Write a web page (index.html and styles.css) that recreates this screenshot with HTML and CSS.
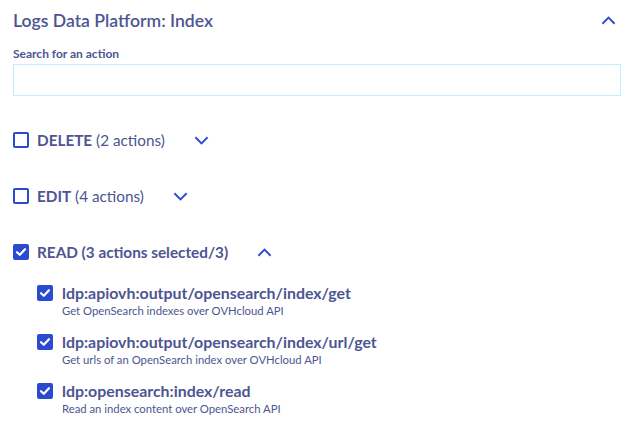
FILE: index.html
```html
<!DOCTYPE html>
<html lang="en">
<head>
<meta charset="utf-8">
<title>Logs Data Platform: Index</title>
<link rel="stylesheet" href="styles.css">
</head>
<body>
<div class="panel">
  <div class="panel-header">
    <h2 class="panel-title">Logs Data Platform: Index</h2>
    <svg class="chev chev-header" viewBox="0 0 16 9"><polyline points="1.5,8 8,1.5 14.5,8"/></svg>
  </div>

  <label class="search-label" for="search">Search for an action</label>
  <input class="search-input" id="search" type="text">

  <div class="group">
    <div class="group-row">
      <span class="box"></span>
      <span class="group-name"><b>DELETE</b> (2 actions)</span>
      <svg class="chev" viewBox="0 0 16 9"><polyline points="1.5,1 8,7.5 14.5,1"/></svg>
    </div>
  </div>

  <div class="group">
    <div class="group-row">
      <span class="box"></span>
      <span class="group-name"><b>EDIT</b> (4 actions)</span>
      <svg class="chev" viewBox="0 0 16 9"><polyline points="1.5,1 8,7.5 14.5,1"/></svg>
    </div>
  </div>

  <div class="group">
    <div class="group-row">
      <span class="box checked"><svg viewBox="0 0 16 16"><polyline points="4,8.2 6.8,10.8 12,5.2"/></svg></span>
      <span class="group-name"><b>READ (3 actions selected/3)</b></span>
      <svg class="chev" viewBox="0 0 16 9"><polyline points="1.5,8 8,1.5 14.5,8"/></svg>
    </div>

    <ul class="actions">
      <li class="action">
        <span class="box checked"><svg viewBox="0 0 16 16"><polyline points="4,8.2 6.8,10.8 12,5.2"/></svg></span>
        <div class="action-text">
          <div class="action-name">ldp:apiovh:output/opensearch/index/get</div>
          <div class="action-desc">Get OpenSearch indexes over OVHcloud API</div>
        </div>
      </li>
      <li class="action">
        <span class="box checked"><svg viewBox="0 0 16 16"><polyline points="4,8.2 6.8,10.8 12,5.2"/></svg></span>
        <div class="action-text">
          <div class="action-name">ldp:apiovh:output/opensearch/index/url/get</div>
          <div class="action-desc">Get urls of an OpenSearch index over OVHcloud API</div>
        </div>
      </li>
      <li class="action">
        <span class="box checked"><svg viewBox="0 0 16 16"><polyline points="4,8.2 6.8,10.8 12,5.2"/></svg></span>
        <div class="action-text">
          <div class="action-name">ldp:opensearch:index/read</div>
          <div class="action-desc">Read an index content over OpenSearch API</div>
        </div>
      </li>
    </ul>
  </div>
</div>
</body>
</html>
```

FILE: styles.css
```css
* { box-sizing: border-box; }

html, body {
  margin: 0;
  padding: 0;
  background: #ffffff;
}

body {
  font-family: "Source Sans Pro", Lato, "Noto Sans", sans-serif;
  color: #4d5592;
}

.panel {
  padding: 0 13px;
}

.panel-header {
  display: flex;
  align-items: center;
  justify-content: space-between;
  height: 40px;
  padding-right: 5px;
}

.panel-title {
  margin: 0;
  font-size: 17.6px;
  font-weight: 600;
  line-height: 24px;
  padding-top: 1px;
}

.chev {
  width: 15px;
  height: 9px;
  fill: none;
  stroke: #2a4bd0;
  stroke-width: 2;
  flex: none;
}

.search-label {
  display: block;
  margin-top: 7px;
  font-size: 12px;
  font-weight: 700;
  line-height: 14px;
}

.search-input {
  display: block;
  width: 100%;
  height: 32px;
  margin-top: 3px;
  border: 1px solid #bef1ff;
  border-radius: 0;
  outline: none;
  background: #fff;
}

.group {
  margin-top: 36px;
}

.group + .group {
  margin-top: 40px;
}

.group-row {
  display: flex;
  align-items: center;
  height: 16px;
}

.box {
  width: 16px;
  height: 16px;
  border: 2px solid #2a4bd0;
  border-radius: 2px;
  flex: none;
  display: flex;
  align-items: center;
  justify-content: center;
}

.box.checked {
  background: #2a4bd0;
}

.box svg {
  width: 16px;
  height: 16px;
  fill: none;
  stroke: #ffffff;
  stroke-width: 2.2;
  stroke-linecap: round;
  stroke-linejoin: round;
  flex: none;
}

.group-name {
  margin-left: 8px;
  margin-right: 29px;
  font-size: 15.3px;
  line-height: 20px;
}

.group-name b {
  font-weight: 700;
}

.actions {
  list-style: none;
  margin: 24px 0 0 0;
  padding: 0 0 0 24px;
  display: flex;
  flex-direction: column;
  gap: 14px;
}

.action {
  display: flex;
  align-items: flex-start;
}

.action .box {
  margin-top: 1px;
}

.action-text {
  margin-left: 9px;
}

.action-name {
  font-size: 15.9px;
  font-weight: 700;
  line-height: 18px;
}

.action-desc {
  font-size: 11.3px;
  line-height: 16px;
  margin-top: 1px;
}
```
